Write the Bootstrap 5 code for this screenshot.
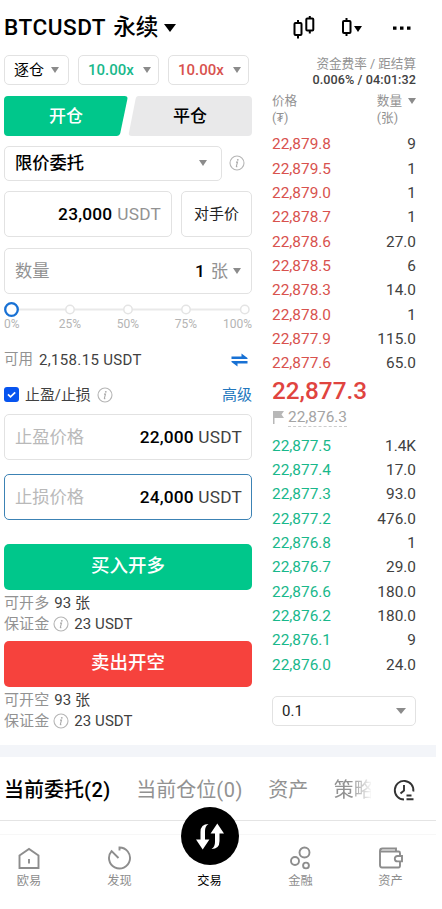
<!DOCTYPE html>
<html lang="zh-CN">
<head>
<meta charset="utf-8">
<meta name="viewport" content="width=device-width, initial-scale=1">
<title>BTCUSDT 永续</title>
<link href="https://cdn.jsdelivr.net/npm/bootstrap@5.3.0/dist/css/bootstrap.min.css" rel="stylesheet">
<style>
:root{--up:#00c78b;--down:#f6423d;--muted:#929292;--line:#e2e2e2}
body{font-family:Roboto,"Noto Sans CJK SC",sans-serif;font-size:15px;line-height:20px;color:#414141;background:#fff;overflow:hidden}
svg{display:block;flex:none}
.app{width:436px;height:909px}
.topbar{height:55px;padding:0 25px 0 4px}
.pair{font-size:22.6px;line-height:30px;font-weight:500;color:#000}
.pair .latin{letter-spacing:.5px}
.pair .kind{margin-left:7px}
.pair .caret{margin-left:6px}
.main-area{height:689.5px;padding-left:4px}
.ticket{width:248px}
.depth{width:144px;margin-left:20px}
.box{border:1px solid var(--line);border-radius:5px;background:#fff}
.tri{width:0;height:0;border:4px solid transparent;border-top:6px solid #8b8b8b;border-bottom:0;flex:none}
.h30{height:30px}.h45{height:46px}
.mode{width:64.5px;padding:0 9px}.lev{width:81px;font-weight:500;font-size:15px;padding:0 7px 0 9px}
.green{color:#19b88b}.red{color:#d8524e}.grey{color:var(--muted)}.pale{color:#b9b9b9}.dark{color:#000}
.switcher{height:40px;margin-top:10.5px}
.switcher svg{width:248px;height:40px;grid-area:1/1}
.switcher .labels{grid-area:1/1;font-size:17px;font-weight:500;z-index:1}
.big{font-size:17.3px}
.num{font-weight:500;color:#000}
.big .digits{letter-spacing:.2px}
.slider-marks{font-size:12px;line-height:14px;color:#b4b4b4;height:14px;margin-top:-1px}
.slider-marks span{width:58px;text-align:center}
.slider-marks span:first-child{width:37px;text-align:left}
.slider-marks span:last-child{width:37px;text-align:right}
.cta{height:46px;border-radius:5px;color:#fff;font-size:18.5px;font-weight:500;border:0;padding:0;width:100%}
.cta.buy,.cta.buy:hover{background:var(--up);color:#fff}.cta.sell,.cta.sell:hover{background:var(--down);color:#fff}
.meta{font-size:15px;height:21.5px;letter-spacing:.08px}
.blue{color:#2277bd}
.small-text{font-size:12.6px;line-height:17px}
.rate{font-weight:500;letter-spacing:.08px;line-height:15px;height:17px}
.order-row{height:24.33px;font-size:15.4px}
.last{font-size:24.3px;line-height:30px;font-weight:500;color:#e0443f;height:31px}
.mark-price{font-size:15.4px;line-height:18px;color:#a4a4a4;border-bottom:1px dashed #ccc}
.band{height:12px;background:#f3f5f9}
.records{height:64px;border-bottom:1px solid #e4e4e4;padding:3px 0 0 4px;font-size:20px;line-height:28px}
.records .next{margin-left:25.5px}
.records .paren{letter-spacing:.5px}
.clip-tab{width:37px;overflow:hidden;white-space:nowrap;-webkit-mask-image:linear-gradient(90deg,#000 45%,transparent 105%);mask-image:linear-gradient(90deg,#000 45%,transparent 105%)}
.dock{height:75px;margin-top:13px;border-top:1px solid #f7f7f7;color:#8d8d8d;font-size:12.2px;line-height:16px}
.dock .slot{padding-top:10px}
.dock .slot svg{margin-bottom:3px}
.dock .trade{padding-top:0;margin-top:-27.5px;color:#000}
.dock .trade svg{margin-bottom:7.5px}
</style>
</head>
<body>
<svg width="0" height="0" class="position-absolute" aria-hidden="true">
  <symbol id="info" viewBox="0 0 16 16"><circle cx="8" cy="8" r="7" fill="none" stroke="#b5b5b5" stroke-width="1.1"/><circle cx="8.8" cy="4.8" r=".9" fill="#aaa"/><path d="M7 7.1h1.5L7.400 11.200q-.2.8.9.2" fill="none" stroke="#aaa" stroke-width="1.1"/></symbol>
</svg>
<main class="app">
  <header class="topbar d-flex align-items-center">
    <div class="pair d-flex align-items-center"><span class="latin">BTCUSDT</span><span class="kind">永续</span>
      <svg class="caret" width="12" height="8" viewBox="0 0 12 8"><path d="M0 0h12L6 8z"/></svg></div>
    <svg class="ms-auto" width="24" height="24" viewBox="0 0 24 24" fill="none" stroke="#000" stroke-width="2"><rect x="1.500" y="7" width="7" height="12" rx="1"/><path d="M5 4v3M5 19v3.500"/><rect x="13.300" y="2.500" width="7" height="12" rx="1"/><path d="M16.800 0v2.500M16.800 14.500v3"/></svg>
    <svg width="24" height="20" viewBox="0 0 24 20" style="margin-left:24px"><path d="M5.500 0v3M5.500 15v3" stroke="#000" stroke-width="2"/><rect x="2" y="3" width="7.500" height="12" rx="1" fill="none" stroke="#000" stroke-width="2"/><path d="M13 8h8l-4 6z"/></svg>
    <svg width="18" height="4" viewBox="0 0 18 4" style="margin-left:28px"><path d="M0 .5h3.500v3.200H0zM7 .5h3.500v3.200H7zM14 .5h3.500v3.200H14z"/></svg>
  </header>

  <div class="main-area d-flex align-items-start">
    <section class="ticket">
      <div class="d-flex h30">
        <div class="box mode d-flex align-items-center justify-content-between dark"><span>逐仓</span><i class="tri"></i></div>
        <div class="box lev green d-flex align-items-center justify-content-between" style="margin-left:9.5px"><span>10.00x</span><i class="tri"></i></div>
        <div class="box lev red d-flex align-items-center justify-content-between" style="margin-left:9px"><span>10.00x</span><i class="tri"></i></div>
      </div>
      <div class="switcher d-grid">
        <svg viewBox="0 0 248 40"><path d="M4 0H120.500Q124 0 123.400 3L116.300 37Q115.500 40 112.500 40H4Q0 40 0 36V4Q0 0 4 0Z" fill="#00c78b"/><path d="M134.500 0H244Q248 0 248 4V36Q248 40 244 40H128Q124.200 40 124.900 37L131.600 3Q132.200 0 134.500 0Z" fill="#e9e9ea"/></svg>
        <div class="labels row g-0 align-items-center text-center"><span class="col text-white">开仓</span><span class="col dark">平仓</span></div>
      </div>
      <div class="d-flex align-items-center" style="margin-top:10px;height:35.500px">
        <div class="box d-flex align-items-center justify-content-between h-100 big num" style="width:218px;padding:0 14px 0 10px"><span>限价委托</span><i class="tri"></i></div>
        <svg width="16" height="16" style="margin-left:7px"><use href="#info"/></svg>
      </div>
      <div class="d-flex h45 justify-content-between" style="margin-top:9.500px">
        <div class="box d-flex align-items-center justify-content-end big" style="width:168px;padding-right:10px"><span class="num digits">23,000</span><span class="grey digits" style="margin-left:5px">USDT</span></div>
        <div class="box d-flex align-items-center justify-content-center" style="width:71px;color:#222">对手价</div>
      </div>
      <div class="box h45 d-flex align-items-center big" style="margin-top:11.500px;padding:0 10px"><span class="grey">数量</span><span class="num ms-auto">1</span><span class="grey" style="margin:0 5px 0 6px">张</span><i class="tri"></i></div>
      <svg width="248" height="17" viewBox="0 0 248 17" style="margin-top:6.500px"><path d="M12 8.500H241" stroke="#e9e9e9" stroke-width="2"/><g fill="#fff" stroke="#e4e4e4" stroke-width="1.500"><circle cx="66" cy="8.500" r="4.200"/><circle cx="124" cy="8.500" r="4.200"/><circle cx="182" cy="8.500" r="4.200"/><circle cx="240.800" cy="8.500" r="4.200"/></g><circle cx="7.500" cy="8.500" r="6.300" fill="#fff" stroke="#1871d4" stroke-width="2.300"/></svg>
      <div class="slider-marks d-flex"><span>0%</span><span>25%</span><span>50%</span><span>75%</span><span>100%</span></div>
      <div class="d-flex align-items-center" style="height:20px;margin-top:19px"><span class="grey" style="font-size:14.500px">可用</span><span style="margin-left:6px;letter-spacing:.34px">2,158.15 USDT</span>
        <svg class="ms-auto" style="margin-right:4px" width="17" height="14" viewBox="0 0 17 14" fill="#1871d4"><path d="M.5 3.500H10.500V.5L16.500 5v1H.5zM16.500 10.500H6.500V13.500L.5 9V8H16.500z"/></svg></div>
      <div class="d-flex align-items-center" style="height:20px;margin-top:15px">
        <svg width="15" height="15" viewBox="0 0 15 15"><rect width="15" height="15" rx="3" fill="#0754ef"/><path d="M4 7.300l2.500 2.500 4.700-4.500" fill="none" stroke="#fff" stroke-width="1.700"/></svg>
        <span style="margin-left:6px;font-size:14.900px">止盈/止损</span><svg width="16" height="16" style="margin-left:6px"><use href="#info"/></svg><span class="blue ms-auto">高级</span></div>
      <div class="box h45 d-flex align-items-center justify-content-between big" style="margin-top:9.500px;padding:0 9px 0 10px"><span class="pale">止盈价格</span><span class="digits"><span class="num">22,000</span> USDT</span></div>
      <div class="box h45 d-flex align-items-center justify-content-between big" style="margin-top:14px;padding:0 9px 0 10px;border-color:#3c82b4"><span class="pale">止损价格</span><span class="digits"><span class="num">24,000</span> USDT</span></div>
      <button class="btn cta buy d-block" style="margin-top:24px">买入开多</button>
      <div class="meta d-flex align-items-center" style="margin-top:2px"><span class="grey">可开多</span><span style="margin-left:5px">93 张</span></div>
      <div class="meta d-flex align-items-center"><span class="grey">保证金</span><svg width="16" height="16" style="margin:0 5px 0 4px"><use href="#info"/></svg>23 USDT</div>
      <button class="btn cta sell d-block" style="margin-top:6px">卖出开空</button>
      <div class="meta d-flex align-items-center" style="margin-top:2px"><span class="grey">可开空</span><span style="margin-left:5px">93 张</span></div>
      <div class="meta d-flex align-items-center"><span class="grey">保证金</span><svg width="16" height="16" style="margin:0 5px 0 4px"><use href="#info"/></svg>23 USDT</div>
    </section>

    <section class="depth">
      <div class="small-text text-end grey text-nowrap">资金费率 / 距结算</div>
      <div class="small-text rate text-end text-nowrap">0.006% / 04:01:32</div>
      <div class="d-flex justify-content-between small-text grey" style="margin-top:3px;height:40.300px">
        <div>价格<br>(₮)</div>
        <div><span class="d-flex align-items-center">数量<i class="tri" style="margin-left:6px"></i></span>(张)</div>
      </div>
      <div class="order-row d-flex align-items-center justify-content-between"><span class="red">22,879.8</span><span>9</span></div>
      <div class="order-row d-flex align-items-center justify-content-between"><span class="red">22,879.5</span><span>1</span></div>
      <div class="order-row d-flex align-items-center justify-content-between"><span class="red">22,879.0</span><span>1</span></div>
      <div class="order-row d-flex align-items-center justify-content-between"><span class="red">22,878.7</span><span>1</span></div>
      <div class="order-row d-flex align-items-center justify-content-between"><span class="red">22,878.6</span><span>27.0</span></div>
      <div class="order-row d-flex align-items-center justify-content-between"><span class="red">22,878.5</span><span>6</span></div>
      <div class="order-row d-flex align-items-center justify-content-between"><span class="red">22,878.3</span><span>14.0</span></div>
      <div class="order-row d-flex align-items-center justify-content-between"><span class="red">22,878.0</span><span>1</span></div>
      <div class="order-row d-flex align-items-center justify-content-between"><span class="red">22,877.9</span><span>115.0</span></div>
      <div class="order-row d-flex align-items-center justify-content-between"><span class="red">22,877.6</span><span>65.0</span></div>
      <div class="last">22,877.3</div>
      <div class="d-flex align-items-center" style="height:22px;margin-bottom:5px"><svg width="12" height="13" viewBox="0 0 12 13" style="margin:0 3px 0 1px"><path d="M0 0h11L8.500 3.500 11 7H1.500v6H0z" fill="#b8b8b8"/></svg><span class="mark-price">22,876.3</span></div>
      <div class="order-row d-flex align-items-center justify-content-between"><span class="green">22,877.5</span><span>1.4K</span></div>
      <div class="order-row d-flex align-items-center justify-content-between"><span class="green">22,877.4</span><span>17.0</span></div>
      <div class="order-row d-flex align-items-center justify-content-between"><span class="green">22,877.3</span><span>93.0</span></div>
      <div class="order-row d-flex align-items-center justify-content-between"><span class="green">22,877.2</span><span>476.0</span></div>
      <div class="order-row d-flex align-items-center justify-content-between"><span class="green">22,876.8</span><span>1</span></div>
      <div class="order-row d-flex align-items-center justify-content-between"><span class="green">22,876.7</span><span>29.0</span></div>
      <div class="order-row d-flex align-items-center justify-content-between"><span class="green">22,876.6</span><span>180.0</span></div>
      <div class="order-row d-flex align-items-center justify-content-between"><span class="green">22,876.2</span><span>180.0</span></div>
      <div class="order-row d-flex align-items-center justify-content-between"><span class="green">22,876.1</span><span>9</span></div>
      <div class="order-row d-flex align-items-center justify-content-between"><span class="green">22,876.0</span><span>24.0</span></div>
      <div class="box h30 d-flex align-items-center justify-content-between" style="margin-top:19px;padding:0 9px;color:#222"><span>0.1</span><i class="tri" style="border-width:6px 5px 0"></i></div>
    </section>
  </div>

  <div class="band"></div>
  <nav class="records d-flex align-items-center grey text-nowrap">
    <span class="num">当前委托<span class="paren">(2)</span></span><span class="next">当前仓位<span class="paren">(0)</span></span><span class="next">资产</span><span class="clip-tab next">策略</span>
    <svg class="ms-auto" width="22" height="22" viewBox="0 0 22 22" style="margin-right:21px" fill="none" stroke="#333" stroke-width="1.900"><path d="M11 20.500A9.300 9.300 0 1 1 20.300 12.500M11 6v5.500L7.500 14.500M13.500 16.500h5M13.500 20.300h7"/></svg>
  </nav>
  <nav class="dock d-flex">
    <div class="slot d-flex flex-column align-items-center" style="width:58px"><svg width="24" height="25" viewBox="0 0 24 25" fill="none" stroke="#8d8d8d" stroke-width="1.900"><path d="M2.500 10.500L12 4l9.500 6.500V23h-19zM12 14v4.500"/></svg>欧易</div>
    <div class="slot d-flex flex-column align-items-center" style="width:123px"><svg width="26" height="25" viewBox="0 0 26 25" fill="none" stroke="#8d8d8d" stroke-width="1.900"><path d="M12.500 5.500V2.500A10.500 10.500 0 1 1 4.600 6.100L11.500 13"/></svg>发现</div>
    <div class="slot trade d-flex flex-column align-items-center" style="width:57px"><svg width="58" height="58" viewBox="0 0 58 58"><circle cx="29" cy="29" r="29"/><path d="M27.500 17Q19.500 17 19.500 25V32.500H15L21.700 42.500 28.400 32.500H24V24Q24 19 27.500 17ZM30.500 42Q38.500 42 38.500 34V26.500H43L36.300 16.500 29.600 26.500H34V35Q34 40 30.500 42Z" fill="#fff"/></svg>交易</div>
    <div class="slot d-flex flex-column align-items-center" style="width:125px"><svg width="24" height="25" viewBox="0 0 24 25" fill="none" stroke="#8d8d8d" stroke-width="1.900"><circle cx="15.500" cy="7.500" r="5"/><circle cx="6" cy="16" r="4"/><circle cx="17" cy="20.500" r="2.900"/></svg>金融</div>
    <div class="slot d-flex flex-column align-items-center" style="width:55px"><svg width="25" height="25" viewBox="0 0 25 25" fill="none" stroke="#8d8d8d" stroke-width="1.900"><path d="M18 6.500V3.500H4.500Q2 3.500 2 6v14q0 2.500 2 2.500h16.500q1.500 0 1.500-2v-4M22 11V8q0-1.500-1.500-1.500H2.500"/><path d="M24 11h-4.500a2.700 2.700 0 0 0 0 5.400H24z"/></svg>资产</div>
  </nav>
</main>
<script src="https://cdn.jsdelivr.net/npm/bootstrap@5.3.0/dist/js/bootstrap.bundle.min.js"></script>
</body>
</html>
